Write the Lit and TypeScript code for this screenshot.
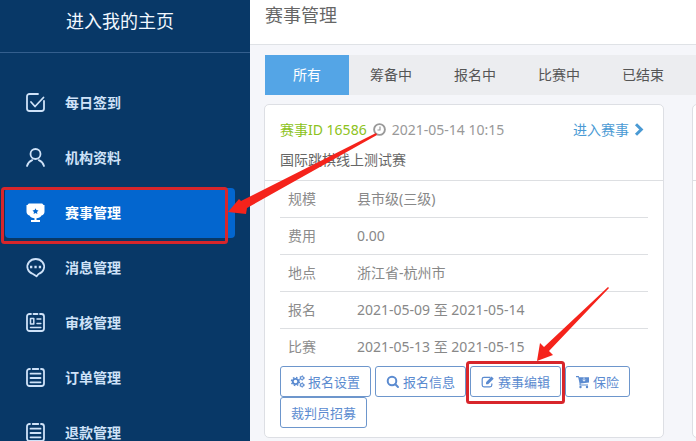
import { LitElement, html, css, svg } from "lit";
import { customElement, property } from "lit/decorators.js";

const fonts = css`"Noto Sans", "Noto Sans CJK SC", sans-serif`;

const menuIcons: Record<string, unknown> = {
  check: svg`<path d="M18 8V15.500A2.500 2.500 0 0 1 15.500 18H3.500A2.500 2.500 0 0 1 1 15.500V3.500A2.500 2.500 0 0 1 3.500 1H12"/><path d="M5 9L9 13.500L17.500 4.500"/>`,
  user: svg`<circle cx="9.500" cy="6" r="5"/><path d="M1 18C2 14.500 4.200 13 6.200 12.200M18 18C17 14.500 14.800 13 12.800 12.200"/>`,
  trophy: svg`<path fill="currentColor" stroke="none" d="M3.500 .5H15.500C16.500 .5 17 1.200 17.500 2H18.500V8.500C18.500 10.500 17.500 12 15.500 12.500C14.500 14.300 12.500 15 10.500 15.200V17H14V19H5V17H8.500V15.200C6.500 15 4.500 14.300 3.500 12.500C1.500 12 .5 10.500 .5 8.500V2H1.500C2 1.200 2.500 .5 3.500 .5Z"/><path fill="#0366cf" stroke="none" d="M9.500 5.200l.9 1.900 2.100.3-1.500 1.500.4 2.100-1.900-1-1.900 1 .4-2.100-1.500-1.500 2.100-.3z"/>`,
  chat: svg`<path d="M7 16A8.400 7.700 0 1 1 12.500 16L10.500 18.300Z"/><path stroke-width="2.400" stroke-linecap="butt" d="M4 9H6.300M8.400 9H10.700M12.800 9H15.100"/>`,
  audit: svg`<path d="M5 1H3.500A2.500 2.500 0 0 0 1 3.500V15.500A2.500 2.500 0 0 0 3.500 18H15.500A2.500 2.500 0 0 0 18 15.500V3.500A2.500 2.500 0 0 0 15.500 1H14M7.500 1H11.500"/><path stroke-width="1.500" d="M4.500 5.500H7.800V11H4.500ZM11 6H14.800M11 10.500H14.800M4.500 14.500H14.800"/>`,
  list: svg`<path d="M4 1H3.500A2.500 2.500 0 0 0 1 3.500V15.500A2.500 2.500 0 0 0 3.500 18H15.500A2.500 2.500 0 0 0 18 15.500V3.500A2.500 2.500 0 0 0 15.500 1H15M6.700 1H12.300"/><path d="M4.500 5.700H14.500M4.500 10H14.500M4.500 14.300H14.500"/>`,
};

const actionIcons: Record<string, unknown> = {
  cogs: svg`<g fill="none" stroke="currentColor"><circle cx="4.500" cy="6.500" r="2.700" stroke-width="1.800"/><circle cx="4.500" cy="6.500" r="4" stroke-width="1.400" stroke-dasharray="1.570 1.570"/><circle cx="11" cy="3" r="1.500" stroke-width="1.200"/><circle cx="11" cy="3" r="2.300" stroke-width=".8" stroke-dasharray="1.200 1.200"/><circle cx="11" cy="10" r="1.500" stroke-width="1.200"/><circle cx="11" cy="10" r="2.300" stroke-width=".8" stroke-dasharray="1.200 1.200"/></g>`,
  search: svg`<g fill="none" stroke="currentColor" stroke-width="2"><circle cx="6" cy="6" r="4.300"/><path stroke-linecap="round" d="M9.300 9.300L12 12"/></g>`,
  edit: svg`<path fill="none" stroke="currentColor" stroke-width="1.200" d="M9.500 2.300H3A1.800 1.800 0 0 0 1.200 4.100V10A1.800 1.800 0 0 0 3 11.800H9A1.800 1.800 0 0 0 10.800 10V8.500"/><path fill="currentColor" d="M5 9.300V7.200L10.600 1.600L12.700 3.700L7.100 9.300Z"/>`,
  cart: svg`<path fill="currentColor" d="M0 1H2.800L3.200 2.300H13V7.500L4.600 8.600V9.500H12V10.500H3.500V8.300L2.200 2.200H0Z"/><circle cx="4.500" cy="12" r="1.200" fill="currentColor"/><circle cx="11" cy="12" r="1.200" fill="currentColor"/><path stroke="#fff" stroke-width=".8" fill="none" d="M8 2.500V6.200M6.500 4.700L8 6.200L9.500 4.700"/>`,
};

@customElement("side-menu")
class SideMenu extends LitElement {
  static styles = css`
    :host { display: block; background: #083867; color: #cfe2f8; overflow: hidden; }
    .home { display: block; height: 52px; line-height: 42px; padding-right: 10px; text-align: center; font-size: 18px; color: #f2f8ff; text-decoration: none; border-bottom: 1px solid #345f8e; box-sizing: content-box; }
    nav { display: grid; gap: 5px; padding: 25px 15px 0 5px; }
    .item { display: flex; align-items: center; gap: 20px; height: 50px; padding-left: 20px; border-radius: 4px; font-size: 14px; font-weight: 700; color: inherit; text-decoration: none; }
    .item.active { background: #0366cf; color: #fff; }
    .item span { padding-bottom: 2px; }
    svg { width: 20px; height: 20px; overflow: visible; fill: none; stroke: currentColor; stroke-width: 1.8; stroke-linecap: round; stroke-linejoin: round; }
  `;
  private items = [
    ["check", "每日签到"],
    ["user", "机构资料"],
    ["trophy", "赛事管理"],
    ["chat", "消息管理"],
    ["audit", "审核管理"],
    ["list", "订单管理"],
    ["list", "退款管理"],
  ];
  render() {
    return html`
      <a class="home" href="#home">进入我的主页</a>
      <nav>
        ${this.items.map(([icon, label]) => html`
          <a class="item ${icon === "trophy" ? "active" : ""}" href="#${icon}">
            <svg viewBox="-1 0 20 20" aria-hidden="true">${menuIcons[icon]}</svg><span>${label}</span>
          </a>`)}
      </nav>`;
  }
}

@customElement("match-card")
class MatchCard extends LitElement {
  static styles = css`
    :host { display: block; background: #fff; border: 1px solid #dddfe4; border-radius: 5px; box-sizing: border-box; font-size: 14px; color: #888; }
    header { padding: 12px 17px 8px 15px; border-bottom: 1px solid #dddfe2; }
    .line { display: flex; align-items: center; height: 24px; gap: 6px; white-space: nowrap; }
    .id { color: #8cc220; }
    .time { display: flex; align-items: center; gap: 6px; color: #999; }
    .enter { display: flex; align-items: center; gap: 4px; margin-left: auto; color: #4a9ad4; text-decoration: none; }
    .name { margin: 6px 0 0; height: 25px; line-height: 25px; font-size: 14px; font-weight: 400; color: #666; }
    .body { padding: 0 15px 9px; }
    table { width: 100%; border-collapse: separate; border-spacing: 0; }
    th, td { box-sizing: border-box; height: 37px; padding: 0 8px 2px; text-align: left; font-weight: 400; border-bottom: 1px solid #dddfe2; }
    th { width: 69px; color: #8c8c8c; }
    tr:last-child > * { border-bottom-color: transparent; }
    .actions { display: flex; flex-wrap: wrap; column-gap: 4px; }
    button { display: flex; align-items: center; gap: 4px; height: 31px; padding: 0 10px; font: inherit; font-size: 13px; color: #5b8bd0; background: #fff; border: 1px solid #6d96cc; border-radius: 3px; white-space: nowrap; }
    svg { width: 13px; height: 13px; flex: none; overflow: visible; }
  `;
  @property({ type: Boolean }) blank = false;
  private rows = [
    ["规模", "县市级(三级)"],
    ["费用", "0.00"],
    ["地点", "浙江省-杭州市"],
    ["报名", "2021-05-09 至 2021-05-14"],
    ["比赛", "2021-05-13 至 2021-05-15"],
  ];
  private actions = [
    ["cogs", "报名设置"],
    ["search", "报名信息"],
    ["edit", "赛事编辑"],
    ["cart", "保险"],
    ["", "裁判员招募"],
  ];
  render() {
    if (this.blank) return html`<header><div class="line"></div><div class="name"></div></header>`;
    return html`
      <header>
        <div class="line">
          <span class="id">赛事ID 16586</span>
          <span class="time">
            <svg viewBox="0 0 13 13" fill="none" stroke="currentColor" aria-hidden="true"><circle cx="6.500" cy="6.500" r="5.400" stroke-width="1.900"/><path stroke-width="1.200" d="M7 3.500V7H4.500"/></svg>
            2021-05-14 10:15
          </span>
          <a class="enter" href="#enter">进入赛事
            <svg viewBox="0 0 13 13" fill="none" stroke="currentColor" stroke-width="3" aria-hidden="true"><path d="M3 1.200L8.300 6.500L3 11.800"/></svg>
          </a>
        </div>
        <h2 class="name">国际跳棋线上测试赛</h2>
      </header>
      <div class="body">
        <table>
          <tbody>${this.rows.map(([k, v]) => html`<tr><th scope="row">${k}</th><td>${v}</td></tr>`)}</tbody>
        </table>
        <div class="actions">
          ${this.actions.map(([icon, label]) => html`
            <button type="button">${icon ? html`<svg viewBox="0 0 13 13" aria-hidden="true">${actionIcons[icon]}</svg>` : ""}${label}</button>`)}
        </div>
      </div>`;
  }
}

@customElement("app-root")
class AppRoot extends LitElement {
  static styles = css`
    :host { display: grid; grid-template-columns: 250px minmax(0, 1fr); position: relative; height: 100vh; overflow: hidden; font-family: ${fonts}; background: #f5f6fa; }
    main { overflow: hidden; }
    h1 { margin: 0; padding-left: 15px; height: 44px; line-height: 31px; font-size: 18px; font-weight: 400; color: #666; background: #fff; border-bottom: 1px solid #dfe2e6; }
    .tabs { display: flex; margin: 10px 0 9px 15px; height: 40px; background: #ecedf0; }
    .tab { width: 84px; padding: 0 0 2px; border: 0; background: none; font: inherit; font-size: 14px; color: #555; }
    .tab.active { background: #54a5e6; color: #fff; }
    .cards { display: grid; grid-auto-flow: column; grid-auto-columns: minmax(400px, 40%); gap: 28px; margin-left: 14px; }
    .marks { position: absolute; left: 0; top: 0; width: 696px; height: 441px; pointer-events: none; }
  `;
  private tabs = ["所有", "筹备中", "报名中", "比赛中", "已结束"];
  render() {
    return html`
      <side-menu></side-menu>
      <main>
        <h1>赛事管理</h1>
        <div class="tabs" role="tablist">
          ${this.tabs.map((t, i) => html`<button type="button" role="tab" aria-selected=${i === 0} class="tab ${i === 0 ? "active" : ""}">${t}</button>`)}
        </div>
        <div class="cards">
          <match-card></match-card>
          <match-card blank></match-card>
        </div>
      </main>
      <svg class="marks" viewBox="0 0 696 441" aria-hidden="true">
        <g fill="none" stroke="#d8262b">
          <rect x="2.500" y="188.500" width="224" height="54" rx="2" stroke-width="3"/>
          <rect x="467.500" y="362.500" width="96" height="40" rx="2" stroke-width="3"/>
        </g>
        <g fill="#f5231b">
          <path d="M228 212L239 199L241 201L376 133L377 135L247 208L246 214Z"/>
          <path d="M537 361L540 343L544 347L608 287L609 288L549 351L553 355Z"/>
        </g>
      </svg>`;
  }
}
